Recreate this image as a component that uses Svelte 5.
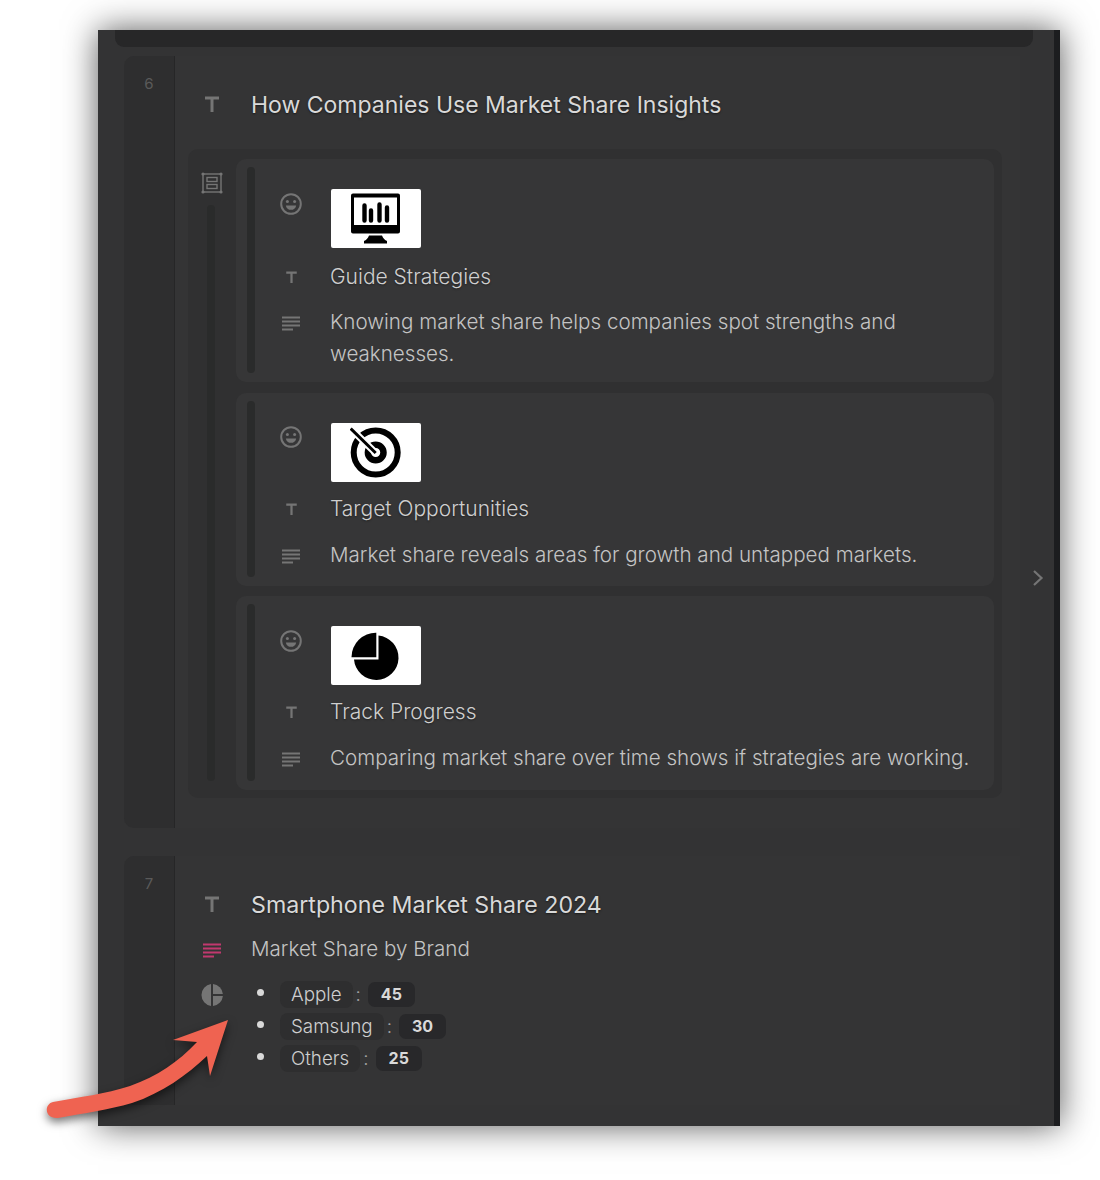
<script>
  const cards = [
    { icon: 'monitor', title: 'Guide Strategies', body: 'Knowing market share helps companies spot strengths and weaknesses.' },
    { icon: 'target', title: 'Target Opportunities', body: 'Market share reveals areas for growth and untapped markets.' },
    { icon: 'pie', title: 'Track Progress', body: 'Comparing market share over time shows if strategies are working.' }
  ];
  const brands = [
    { name: 'Apple', value: 45 },
    { name: 'Samsung', value: 30 },
    { name: 'Others', value: 25 }
  ];
</script>

{#snippet tIcon(w, h)}
  <svg width={w} height={h} viewBox="0 0 14 16" fill="none" stroke="currentColor" stroke-width="3">
    <path d="M0 2H14M7 2V16" />
  </svg>
{/snippet}

{#snippet linesIcon(color)}
  <svg width="18" height="16" viewBox="0 0 18 16" fill="none" stroke={color} stroke-width="2">
    <path d="M0 1.500H18M0 5.500H18M0 9.500H18M0 13.500H11" />
  </svg>
{/snippet}

<div class="page">
  <div class="window">
    <div class="top-remnant"></div>

    <section class="slide first">
      <div class="gutter">6</div>
      <div class="content">
        <div class="row heading">
          <span class="t-big">{@render tIcon(14, 16)}</span>
          <h2>How Companies Use Market Share Insights</h2>
        </div>

        <div class="group">
          <div class="group-side">
            <svg width="22" height="22" viewBox="0 0 22 22" fill="none" stroke="#757575" stroke-width="1.400">
              <rect x="2" y="2" width="18" height="18" />
              <rect x="6" y="5.500" width="10" height="4" />
              <rect x="6" y="12.500" width="10" height="4" />
              <g fill="#757575" stroke="none">
                <circle cx="2" cy="2" r="1.600" /><circle cx="20" cy="2" r="1.600" />
                <circle cx="2" cy="20" r="1.600" /><circle cx="20" cy="20" r="1.600" />
              </g>
            </svg>
            <div class="rail"></div>
          </div>
          <div class="cards">
            {#each cards as card}
              <div class="card">
                <div class="rail"></div>
                <div class="card-body">
                  <div class="row image-row">
                    <span class="side-icon smile">
                      <svg width="22" height="22" viewBox="0 0 22 22" fill="none" stroke="#757575" stroke-width="2">
                        <circle cx="11" cy="11" r="9.800" />
                        <circle cx="7.400" cy="8.400" r="1.500" fill="#757575" stroke="none" />
                        <circle cx="14.600" cy="8.400" r="1.500" fill="#757575" stroke="none" />
                        <path d="M5.800 12.400H16.200C15.600 15.400 13.600 16.800 11 16.800S6.400 15.400 5.800 12.400Z" fill="#757575" stroke="none" />
                      </svg>
                    </span>
                    <div class="picture">
                      {#if card.icon === 'monitor'}
                        <svg width="52" height="52" viewBox="0 0 52 52">
                          <path fill-rule="evenodd" d="M3 0.500H48A2 2 0 0 1 50 2.500V38.500A2 2 0 0 1 48 40.500H3A2 2 0 0 1 1 38.500V2.500A2 2 0 0 1 3 0.500ZM4 4.500V32H47V4.500Z" fill="#000" />
                          <g fill="none" stroke="#000" stroke-width="4.400" stroke-linecap="round">
                            <path d="M14.500 12.500V27.500M21 17.500V27.500M29.500 11.500V27.500M37 14.500V27.500" />
                          </g>
                          <path d="M19 42.500H32C33 45.500 35 47 37 48V50.500H14V48C16 47 18 45.500 19 42.500Z" fill="#000" />
                        </svg>
                      {:else if card.icon === 'target'}
                        <svg width="52" height="52" viewBox="0 0 52 52">
                          <circle cx="25.700" cy="25.500" r="22" fill="none" stroke="#000" stroke-width="6" />
                          <circle cx="25.700" cy="25.500" r="7.800" fill="none" stroke="#000" stroke-width="6.500" />
                          <path d="M0.700 1.500L25.700 26" stroke="#fff" stroke-width="7" />
                          <path d="M0.700 1.500L25.700 26" stroke="#000" stroke-width="3" />
                        </svg>
                      {:else}
                        <svg width="52" height="52" viewBox="0 0 52 52">
                          <path d="M26.300 2.800V27.200H1.500A24.400 24.400 0 0 1 26.300 2.800Z" fill="#000" />
                          <path d="M28.500 5.500A22.300 22.300 0 1 1 4 29.500H28.500Z" fill="#000" />
                        </svg>
                      {/if}
                    </div>
                  </div>
                  <div class="row title-row">
                    <span class="side-icon small-t">{@render tIcon(11, 12)}</span>
                    <h3>{card.title}</h3>
                  </div>
                  <div class="row text-row">
                    <span class="side-icon lines">{@render linesIcon('#757575')}</span>
                    <p>{card.body}</p>
                  </div>
                </div>
              </div>
            {/each}
          </div>
        </div>
      </div>
    </section>

    <section class="slide second">
      <div class="gutter">7</div>
      <div class="content">
        <div class="row heading">
          <span class="t-big">{@render tIcon(14, 16)}</span>
          <h2>Smartphone Market Share 2024</h2>
        </div>
        <div class="row sub">
          <span class="side-big pink">{@render linesIcon('#c2386f')}</span>
          <p>Market Share by Brand</p>
        </div>
        <div class="row chart">
          <span class="side-big pie-icon">
            <svg width="22" height="22" viewBox="0 0 22 22" fill="#757575">
              <path d="M10 0.100V21.900A11 11 0 0 1 10 0.100Z" />
              <path d="M12 0.100A11 11 0 0 1 21.900 10H12Z" />
              <path d="M12 12H21.900A11 11 0 0 1 12 21.900Z" />
            </svg>
          </span>
          <ul>
            {#each brands as brand}
              <li>
                <span class="dot"></span>
                <span class="name">{brand.name}</span>
                <span class="colon">:</span>
                <span class="value">{brand.value}</span>
              </li>
            {/each}
          </ul>
        </div>
      </div>
    </section>

    <div class="chevron">
      <svg width="12" height="18" viewBox="0 0 12 18" fill="none" stroke="#757575" stroke-width="2.200">
        <path d="M2 2L9.500 9L2 16" />
      </svg>
    </div>
    <div class="scrollbar"></div>
  </div>

  <svg class="arrow" width="200" height="120" viewBox="0 0 200 120">
    <path d="M228 1020L173 1040L197 1042C178 1062 158 1076 130 1086C105 1094 80 1097 53 1102C44 1104 44 1119 58 1118C85 1113 108 1110 132 1103C162 1093 187 1075 207 1056L210 1076Z" transform="translate(-40 -1010)" fill="#ef6351" />
  </svg>
</div>

<style>
  :global(body) {
    background: #fff;
    font-family: Inter, "Liberation Sans", sans-serif;
  }

  .page {
    position: relative;
    height: 1180px;
    padding: 30px 0 0 98px;
    box-sizing: border-box;
  }

  .window {
    position: relative;
    width: 962px;
    height: 1096px;
    background: #333334;
    box-shadow: 0 0 32px rgba(0, 0, 0, 0.65);
    overflow: hidden;
    color: #c9c9c9;
  }

  .top-remnant {
    width: 918px;
    height: 17px;
    margin-left: 17px;
    background: #272728;
    border-radius: 0 0 9px 9px;
  }

  .slide {
    display: flex;
    margin-left: 26px;
    width: 896px;
    background: #343435;
    border-radius: 10px 0 0 10px;
    overflow: hidden;
  }

  .first {
    height: 772px;
    margin-top: 9px;
  }

  .second {
    height: 249px;
    margin-top: 28px;
  }

  .gutter {
    flex: none;
    width: 50px;
    background: #2e2e2f;
    border-right: 1px solid #262627;
    padding-top: 19px;
    text-align: center;
    font-size: 15px;
    line-height: 18px;
    color: #5a5a5a;
  }

  .content {
    flex: 1;
    min-width: 0;
    padding: 0 0 0 13px;
  }

  .row {
    display: flex;
  }

  .heading {
    align-items: center;
    height: 32px;
    margin-top: 33px;
  }

  .t-big {
    flex: none;
    display: flex;
    width: 47px;
    justify-content: center;
    color: #757575;
    margin-right: 16px;
    margin-top: -3px;
  }

  h2 {
    margin: 0;
    font-size: 23px;
    font-weight: 400;
    color: #d9d9d9;
    white-space: nowrap;
    text-shadow: 0 1px 2px rgba(0, 0, 0, 0.5);
  }

  .second h2 {
    font-size: 23.200px;
  }

  .group {
    display: flex;
    width: 814px;
    height: 649px;
    margin-top: 28px;
    box-sizing: border-box;
    background: #303031;
    border-radius: 10px;
    padding: 10px 8px 8px 0;
  }

  .group-side {
    flex: none;
    width: 48px;
    display: flex;
    flex-direction: column;
    align-items: center;
    padding-top: 13px;
    gap: 11px;
  }

  .group-side .rail {
    height: 576px;
    margin-right: 2px;
  }

  .rail {
    flex: none;
    width: 8px;
    background: #2a2b2b;
    border-radius: 5px;
  }

  .cards {
    flex: 1;
    min-width: 0;
    display: flex;
    flex-direction: column;
    gap: 11px;
  }

  .card {
    display: flex;
    background: #363637;
    border-radius: 10px;
    padding: 8px 0 9px 11px;
  }

  .card:nth-child(3) {
    margin-top: -1px;
  }

  .card-body {
    flex: 1;
    min-width: 0;
    padding: 22px 0 7px 25px;
  }

  .card:first-child .card-body {
    padding-bottom: 4px;
  }

  .card:nth-child(3) .card-body {
    padding-bottom: 8px;
  }

  .side-icon {
    flex: none;
    display: flex;
    justify-content: center;
    width: 22px;
    margin-right: 28px;
  }

  .image-row {
    height: 60px;
    align-items: flex-start;
  }

  .smile {
    margin-top: 4px;
  }

  .card:nth-child(2) .smile {
    margin-top: 3px;
  }

  .picture {
    width: 90px;
    height: 59px;
    margin-left: 1px;
    background: #fff;
    border-radius: 2px;
    display: flex;
    align-items: center;
    justify-content: center;
  }

  .title-row {
    margin-top: 9px;
    align-items: center;
    height: 32px;
  }

  .card:first-child .title-row {
    margin-top: 11px;
  }

  .small-t {
    color: #757575;
    margin-top: 2px;
  }

  h3 {
    margin: 1px 0 -1px;
    font-size: 21px;
    font-weight: 350;
    line-height: 32px;
    color: #cfcfcf;
    text-shadow: 0 1px 2px rgba(0, 0, 0, 0.4);
  }

  .text-row {
    margin-top: 14px;
  }

  .card:first-child .text-row {
    margin-top: 13px;
  }

  .lines {
    margin-top: 11px;
  }

  p {
    margin: 1px 0 -1px;
    font-size: 20.600px;
    font-weight: 300;
    line-height: 32px;
    color: #c4c4c4;
    max-width: 650px;
  }

  .card:first-child p {
    max-width: 610px;
  }

  .sub {
    align-items: center;
    height: 32px;
    margin-top: 11px;
  }

  .side-big {
    flex: none;
    display: flex;
    justify-content: center;
    width: 47px;
    margin-right: 16px;
  }

  .pink {
    margin-top: 6px;
  }

  .chart {
    margin-top: 14px;
  }

  .pie-icon {
    padding-top: 6px;
    align-self: flex-start;
  }

  ul {
    list-style: none;
    margin: 0;
    padding: 0;
  }

  li {
    display: flex;
    align-items: center;
    height: 32px;
    font-size: 18.800px;
  }

  .dot {
    width: 7px;
    height: 7px;
    border-radius: 50%;
    background: #d9d9d9;
    margin: -3px 16px 0 6px;
    flex: none;
  }

  .name {
    background: #2e2e2f;
    border-radius: 8px;
    padding: 0 11px;
    height: 27px;
    line-height: 27px;
    font-weight: 300;
    color: #cfcfcf;
  }

  .colon {
    margin: 0 7px 0 3px;
    color: #a0a0a0;
    font-weight: 300;
  }

  .value {
    background: #28282a;
    border-radius: 7px;
    padding: 0 13px;
    height: 25px;
    line-height: 25px;
    font-size: 16px;
    font-weight: 700;
    color: #d9d9d9;
  }

  .chevron {
    position: absolute;
    left: 934px;
    top: 539px;
  }

  .scrollbar {
    position: absolute;
    right: 0;
    top: 0;
    width: 6px;
    height: 100%;
    background: #1c1d1f;
  }

  .arrow {
    position: absolute;
    left: 40px;
    top: 1010px;
    filter: drop-shadow(0 4px 5px rgba(0, 0, 0, 0.55));
  }
</style>
